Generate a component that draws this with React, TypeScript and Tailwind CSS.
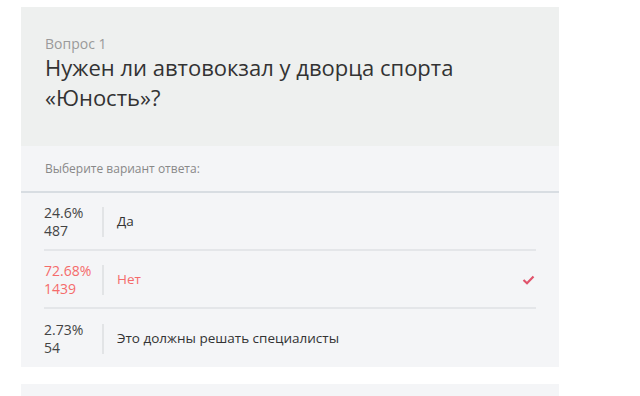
import React from 'react';

const answers = [
  { pct: '24.6%', count: '487', text: 'Да', chosen: false },
  { pct: '72.68%', count: '1439', text: 'Нет', chosen: true },
  { pct: '2.73%', count: '54', text: 'Это должны решать специалисты', chosen: false },
];

export default function App() {
  return (
    <div className="min-h-[396px] bg-white pt-[7px] pl-[21px] font-['Open_Sans',sans-serif]">
      <div className="w-[538px]">
        <div className="bg-[#eef0ef] h-[139px] px-6 pt-[27px]">
          <div className="text-[14px] leading-5 text-[#9a9a9a]">Вопрос 1</div>
          <h1 className="text-[22px] leading-[30px] text-[#333] mt-[-2px]">Нужен ли автовокзал у дворца спорта «Юность»?</h1>
        </div>
        <div className="bg-[#f4f5f7]">
          <div className="h-[47px] px-6 flex items-center text-[12px] text-[#888] border-b-2 border-[#d8dde2]">
            Выберите вариант ответа:
          </div>
          <div className="px-[23px]">
            {answers.map((a, i) => (
              <div
                key={i}
                className={`flex items-center h-[58px] pt-[1px] ${i < answers.length - 1 ? 'border-b-2 border-[#e4e6e9]' : ''}`}
              >
                <div className={`w-[58px] text-[14px] leading-[18px] ${a.chosen ? 'text-[#f56b6b]' : 'text-[#444]'}`}>
                  <div>{a.pct}</div>
                  <div>{a.count}</div>
                </div>
                <div className="w-[2px] h-[30px] bg-[#e2e4e6]" />
                <div className={`flex-1 pl-[13px] text-[13.5px] ${a.chosen ? 'text-[#f56b6b]' : 'text-[#333]'}`}>{a.text}</div>
                {a.chosen && (
                  <svg width="13" height="10" viewBox="0 0 13 10" className="mr-[1px]">
                    <path d="M1.5 5 L5 8.2 L11.5 1.5" fill="none" stroke="#e0536b" strokeWidth="2.2" />
                  </svg>
                )}
              </div>
            ))}
          </div>
        </div>
        <div className="h-[17px]" />
        <div className="bg-[#f4f5f7] h-[20px]" />
      </div>
    </div>
  );
}
